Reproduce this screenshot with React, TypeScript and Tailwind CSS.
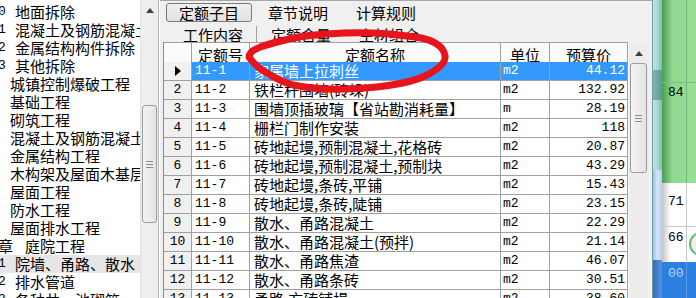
import React from "react"

const MONO = "font-['Liberation_Mono','Noto_Sans_CJK_SC',monospace] text-[13px]"

type LeftItem = { num?: string; text: string; indent?: boolean; chapter?: boolean; active?: boolean }

const LEFT_ITEMS: LeftItem[] = [
  { num: "0", text: "地面拆除" },
  { num: "1", text: "混凝土及钢筋混凝土拆除" },
  { num: "2", text: "金属结构构件拆除" },
  { num: "3", text: "其他拆除" },
  { indent: true, text: "城镇控制爆破工程" },
  { indent: true, text: "基础工程" },
  { indent: true, text: "砌筑工程" },
  { indent: true, text: "混凝土及钢筋混凝土工程" },
  { indent: true, text: "金属结构工程" },
  { indent: true, text: "木构架及屋面木基层工程" },
  { indent: true, text: "屋面工程" },
  { indent: true, text: "防水工程" },
  { indent: true, text: "屋面排水工程" },
  { chapter: true, text: "庭院工程" },
  { num: "1", text: "院墙、甬路、散水", active: true },
  { num: "2", text: "排水管道" },
  { num: "3", text: "各种井、池砌筑" },
]

// 定额子目 rows
const ROWS = [
  { code: "11-1", name: "家属墙上拉刺丝", unit: "m2", price: "44.12" },
  { code: "11-2", name: "铁栏杆围墙(砖垛)", unit: "m2", price: "132.92" },
  { code: "11-3", name: "围墙顶插玻璃【省站勘消耗量】", unit: "m", price: "28.19" },
  { code: "11-4", name: "栅栏门制作安装", unit: "m2", price: "118" },
  { code: "11-5", name: "砖地起墁,预制混凝土,花格砖", unit: "m2", price: "20.87" },
  { code: "11-6", name: "砖地起墁,预制混凝土,预制块", unit: "m2", price: "43.29" },
  { code: "11-7", name: "砖地起墁,条砖,平铺", unit: "m2", price: "15.43" },
  { code: "11-8", name: "砖地起墁,条砖,陡铺", unit: "m2", price: "23.15" },
  { code: "11-9", name: "散水、甬路混凝土", unit: "m2", price: "22.29" },
  { code: "11-10", name: "散水、甬路混凝土(预拌)", unit: "m2", price: "21.14" },
  { code: "11-11", name: "散水、甬路焦渣", unit: "m2", price: "46.07" },
  { code: "11-12", name: "散水、甬路条砖", unit: "m2", price: "30.51" },
  { code: "11-13", name: "甬路,方砖铺墁", unit: "m2", price: "38.60" },
]

function UpArrow() {
  return (
    <svg width="8" height="5" viewBox="0 0 8 5">
      <path d="M0 5L4 0L8 5Z" fill="#404040" />
    </svg>
  )
}

function Thumb({ h }: { h: string }) {
  return (
    <div
      className={`${h} mx-[1px] rounded-[3px] border border-[#9c9c9c] bg-[linear-gradient(to_right,#f4f4f4,#e4e4e4)] flex items-center justify-center`}
    >
      <div className="flex flex-col gap-[2px]">
        <div className="w-[7px] h-[1px] bg-[#8a8a8a]" />
        <div className="w-[7px] h-[1px] bg-[#8a8a8a]" />
        <div className="w-[7px] h-[1px] bg-[#8a8a8a]" />
      </div>
    </div>
  )
}

export default function App() {
  return (
    <div className="relative flex w-[696px] h-[298px] overflow-hidden bg-[#f0f0f0] text-black text-[15px] font-['Noto_Sans_CJK_SC','Noto_Sans',sans-serif]">
      {/* Chapter tree */}
      <div className="w-[140px] shrink-0 bg-white pt-[3px] overflow-hidden">
        {LEFT_ITEMS.map((it, i) => (
          <div
            key={i}
            className={`h-[18px] leading-[18px] whitespace-nowrap flex ${it.active ? "bg-[#e6e6e6]" : ""}`}
          >
            {it.num && <span className={`${MONO} w-[17px] shrink-0 -ml-[2px]`}>{it.num}</span>}
            {it.indent && <span className="w-[10px] shrink-0" />}
            {it.chapter && (
              <>
                <span className="-ml-[2px]">章</span>
                <span className="w-[12px] shrink-0" />
              </>
            )}
            <span>{it.text}</span>
          </div>
        ))}
      </div>

      {/* tree scrollbar */}
      <div className="w-[18px] shrink-0 flex flex-col bg-[#eeeeee] border-l border-[#e2e2e2]">
        <div className="h-[20px] flex items-center justify-center">
          <UpArrow />
        </div>
        <div className="h-[85px]" />
        <Thumb h="h-[118px]" />
      </div>
      <div className="w-[1px] bg-[#b8b8b8]" />
      <div className="w-[1px] bg-white" />

      {/* Main panel */}
      <div className="w-[492px] shrink-0 flex flex-col border-t border-[#a8a8a8]">
        <div className="h-[22px] pt-[2px] pl-[6px] flex">
          <div className="w-[86px] h-[19px] rounded-[3px] border border-[#7a7a7a] bg-[linear-gradient(#f0f0f0,#e2e2e2)] flex items-center justify-center leading-none">
            定额子目
          </div>
          <div className="w-[88px] ml-[2px] flex items-center justify-center leading-none">章节说明</div>
          <div className="w-[88px] flex items-center justify-center leading-none">计算规则</div>
        </div>
        <div className="h-[22px] pt-[4px] pl-[10px] flex items-center leading-none">
          <div className="w-[86px] flex justify-center">工作内容</div>
          <div className="w-[1px] h-[16px] bg-[#a0a0a0]" />
          <div className="w-[88px] flex justify-center">定额含量</div>
          <div className="w-[88px] flex justify-center">主材组合</div>
        </div>

        {/* Grid */}
        <div className="flex ml-[3px]">
          <div className="w-[465px] border-l border-[#8c8c8c]">
            <div className="grid grid-cols-[28px_58px_251px_49px_78px] h-[20px] border-t border-[#a0a0a0] bg-[#fbfbfb] leading-[19px]">
              <div className="border-r border-b border-[#a0a0a0]" />
              <div className="border-r border-b border-[#a0a0a0] text-center pt-[2px]">定额号</div>
              <div className="border-r border-b border-[#a0a0a0] text-center pt-[2px]">定额名称</div>
              <div className="border-r border-b border-[#a0a0a0] text-center pt-[2px]">单位</div>
              <div className="border-r border-b border-[#a0a0a0] text-center pt-[2px]">预算价</div>
            </div>
            {ROWS.map((r, i) => {
              const sel = i === 0
              const cell = `border-r border-b border-[#a0a0a0] overflow-hidden whitespace-nowrap ${sel ? "bg-[#3399ff] text-white" : "bg-white"}`
              return (
                <div key={r.code} className="grid grid-cols-[28px_58px_251px_49px_78px] h-[19px] leading-[18px]">
                  <div className={`border-r border-b border-[#a0a0a0] bg-[#f0f0f0] flex items-center justify-center ${MONO}`}>
                    {sel ? (
                      <svg width="6" height="10" viewBox="0 0 6 10">
                        <path d="M0 0L6 5L0 10Z" fill="#000" />
                      </svg>
                    ) : (
                      i + 1
                    )}
                  </div>
                  <div className={`${cell} ${MONO} pl-[3px]`}>{r.code}</div>
                  <div className={`${cell} pl-[4px]`}>{r.name}</div>
                  <div className={`${cell} ${MONO} pl-[2px]`}>{r.unit}</div>
                  <div className={`${cell} ${MONO} pr-[2px] text-right`}>{r.price}</div>
                </div>
              )
            })}
          </div>
          {/* grid scrollbar */}
          <div className="w-[20px] flex flex-col bg-[#ececec] border-l border-[#f8f8f8]">
            <div className="h-[21px] flex items-center justify-center pt-[2px]">
              <UpArrow />
            </div>
            <Thumb h="h-[110px]" />
          </div>
        </div>
      </div>

      {/* neighbour window frame */}
      <div className="w-[10px] shrink-0 flex flex-col border-l border-[#6e9e9a]">
        <div className="h-[70px] bg-[linear-gradient(to_right,#bfe6e2,#a6d8d2,#80bcb6)]" />
        <div className="h-[30px] bg-[linear-gradient(to_right,#7fb6b2,#5a9a96)]" />
        <div className="h-[70px] bg-[linear-gradient(to_right,#bfe6e2,#a6d8d2,#80bcb6)]" />
        <div className="h-[90px] bg-[linear-gradient(to_right,#9cc2ea,#d6e6f8,#b4cdee)]" />
        <div className="flex-1 bg-[linear-gradient(to_right,#2f6cc0,#5b95dc)]" />
      </div>

      {/* neighbour window content */}
      <div className={`w-[34px] shrink-0 flex flex-col ${MONO}`}>
        <div className="h-[83px] grid grid-cols-[25px_9px] border-b border-[#7cbf7c] bg-[linear-gradient(to_right,#4c9c52,#8fd78f_30%,#98e098)]">
          <div className="border-r border-[#78b878]" />
        </div>
        <div className="h-[100px] grid grid-cols-[25px_9px] bg-[linear-gradient(to_right,#4c9c52,#8fd78f_30%,#98e098)]">
          <div className="border-r border-[#78b878] pl-[6px] pt-[2px] leading-[16px]">84</div>
        </div>
        <div className="h-[44px] grid grid-cols-[25px_9px] border-b border-[#c8c8c8] bg-[linear-gradient(to_right,#c4c4c4,#ffffff_25%)]">
          <div className="border-r border-[#c8c8c8] pl-[6px] pt-[11px] leading-[16px]">71</div>
        </div>
        <div className="h-[35px] grid grid-cols-[25px_9px] bg-[linear-gradient(to_right,#c4c4c4,#ffffff_25%)]">
          <div className="border-r border-[#c8c8c8] pl-[6px] pt-[3px] leading-[16px]">66</div>
          <div className="relative overflow-hidden">
            <div className="absolute left-[2px] top-[5px] w-[24px] h-[24px] rounded-full border-2 border-[#5cc07a] bg-[#f6ecea]" />
          </div>
        </div>
        <div className="flex-1 grid grid-cols-[25px_9px] bg-[#2a7fe0] text-[#b8d8ff]">
          <div className="border-r border-[#5a9ae6] pl-[6px] pt-[4px] leading-[16px]">00</div>
        </div>
      </div>

      {/* red hand-drawn ring */}
      <svg className="absolute left-0 top-0 pointer-events-none" width="696" height="298" viewBox="0 0 696 298">
        <path
          d="M249 57C256 68 276 80 293 85C312 89 328 89.5 345 89C375 88.5 408 84 425 76C437 70 446 63 445 56C444 46 432 39 415 37C395 34 370 32 345 33C320 34 300 36 285 40C265 45 249 49 249 57Z"
          fill="none"
          stroke="#e8141c"
          strokeWidth="7"
          strokeLinejoin="round"
        />
      </svg>
    </div>
  )
}
